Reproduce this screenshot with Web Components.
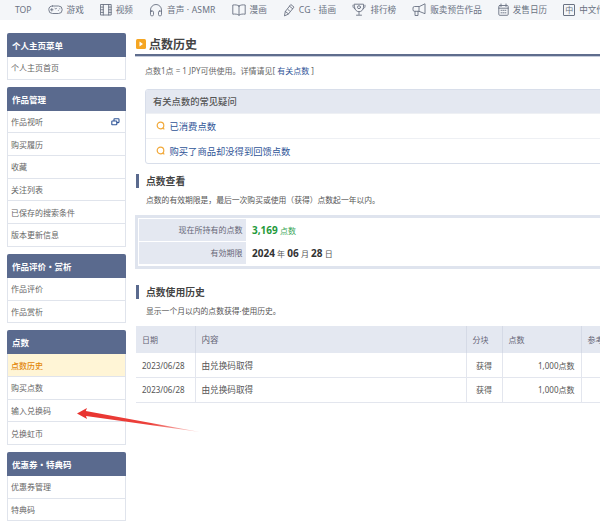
<!DOCTYPE html>
<html lang="zh-CN"><head><meta charset="utf-8"><title>点数历史</title>
<style>
html,body{margin:0;padding:0;background:#fff;overflow:hidden}
body{width:600px;height:527px;position:relative;font-family:"Noto Sans","Noto Sans CJK SC",sans-serif;color:#444;font-size:8px}
.wrap{display:flex;align-items:flex-start;gap:9px;padding:13px 0 0 7px;width:900px;box-sizing:border-box}
</style></head><body>
<x-nav>
<x-nav-item>TOP</x-nav-item>
<x-nav-item icon="game">游戏</x-nav-item>
<x-nav-item icon="film">视频</x-nav-item>
<x-nav-item icon="phones" style="letter-spacing:.15px">音声 · ASMR</x-nav-item>
<x-nav-item icon="book">漫画</x-nav-item>
<x-nav-item icon="pen" style="letter-spacing:.3px">CG · 插画</x-nav-item>
<x-nav-item icon="trophy">排行榜</x-nav-item>
<x-nav-item icon="mega">贩卖预告作品</x-nav-item>
<x-nav-item icon="cal">发售日历</x-nav-item>
<x-nav-item icon="zh">中文作品</x-nav-item>
</x-nav>
<div class="wrap">
<x-sidebar>
<x-side-group label="个人主页菜单"><x-side-item>个人主页首页</x-side-item></x-side-group>
<x-side-group label="作品管理"><x-side-item ext>作品视听</x-side-item><x-side-item>购买履历</x-side-item><x-side-item>收藏</x-side-item><x-side-item>关注列表</x-side-item><x-side-item>已保存的搜索条件</x-side-item><x-side-item>版本更新信息</x-side-item></x-side-group>
<x-side-group label="作品评价・赏析"><x-side-item>作品评价</x-side-item><x-side-item>作品赏析</x-side-item></x-side-group>
<x-side-group label="点数"><x-side-item active>点数历史</x-side-item><x-side-item>购买点数</x-side-item><x-side-item>输入兑换码</x-side-item><x-side-item>兑换虹币</x-side-item></x-side-group>
<x-side-group label="优惠券・特典码"><x-side-item>优惠券管理</x-side-item><x-side-item>特典码</x-side-item></x-side-group>
</x-sidebar>
<x-main>
<x-page-title>点数历史</x-page-title>
<x-faq></x-faq>
<x-section label="点数查看" desc="点数的有效期限是，最后一次购买或使用（获得）点数起一年以内。"><x-points></x-points></x-section>
<x-section label="点数使用历史" desc="显示一个月以内的点数获得·使用历史。"><x-history></x-history></x-section>
</x-main>
</div>
<x-arrow></x-arrow>
<script>
const def=(name,html,extra={})=>{customElements.define(name,class extends HTMLElement{
  constructor(){super();this.attachShadow({mode:'open'}).innerHTML=html;}
  connectedCallback(){extra.init&&extra.init.call(this);}
});};
const S='fill="none" stroke="#6a7282" stroke-width=".9" stroke-linecap="round" stroke-linejoin="round"';
const ICONS={
game:[15,`<rect x=".8" y="3" width="13.400" height="7.500" rx="3.700" ${S}/><path d="M3.800 5.500v2.500M2.600 6.750h2.400M7 5.500c.5.4 1 .4 1.500 0M10.300 7.400h.01M11.800 5.800h.01" ${S}/>`],
film:[12,`<path d="M.8 1.500h10.400v10.500H.8z" ${S}/><path d="M3.300 1.500v10.500M8.700 1.500v10.500M.8 4.100h2.500M.8 6.750h2.500M.8 9.400h2.500M8.700 4.100h2.500M8.700 6.750h2.500M8.700 9.400h2.500" ${S}/>`],
phones:[14,`<path d="M1.500 9V7a5.500 5.500 0 0 1 11 0v2" ${S}/><rect x="1.500" y="8" width="3" height="4.800" rx="1.200" ${S}/><rect x="9.500" y="8" width="3" height="4.800" rx="1.200" ${S}/>`],
book:[14,`<path d="M7 3C5.500 1.800 3 1.700.8 2v9.200c2.200-.3 4.700-.2 6.200 1 1.500-1.200 4-1.300 6.200-1V2C11 1.700 8.500 1.800 7 3zM7 3v9.200" ${S}/>`],
pen:[12,`<path d="M1.500 12.500l.8-4L7.800 1.500l3.200 2.600-5.500 6.800z" ${S}/><path d="M2.300 8.500l3.200 2.400M6.500 3.200l3.200 2.600M5 6.600l1.500 1.200" ${S}/>`],
trophy:[14,`<path d="M2.500 1.200h9v3a4.500 4.500 0 0 1-9 0zM1 2.200c-.3 2 .4 3.100 2 3.600M13 2.200c.3 2-.4 3.100-2 3.600M7 8.800v2.700M4.500 12.200h5" ${S}/><circle cx="7" cy="4.200" r="1.500" ${S}/>`],
mega:[14,`<path d="M13 1.200v9.500L7 8.300H2.500A1.500 1.500 0 0 1 1 6.800V5a1.500 1.500 0 0 1 1.500-1.500H7zM7 3.500v4.800M3 8.300v4.200h3V8.300" ${S}/>`],
cal:[11,`<rect x=".8" y="2.500" width="9.400" height="9.800" rx="1" ${S}/><path d="M3 1v2.500M8 1v2.500M.8 5.200h9.400M3 7.300h.9M5 7.300h.9M7 7.300h.9M3 9.800h.9M5 9.800h.9M7 9.800h.9" ${S}/>`]
};
def('x-nav',`<style>:host{display:flex;align-items:center;gap:16px;height:20px;padding-left:15px;background:#f4f6f9;white-space:nowrap;overflow:hidden;width:600px;box-sizing:border-box}</style><slot></slot>`);
def('x-nav-item',`<style>:host{display:inline-flex;align-items:center;gap:4px;font-size:8.600px;color:#6a7282;flex:none;line-height:20px}svg{display:block;flex:none}.z{display:block;box-sizing:border-box;width:12px;height:12px;border:1px solid #6a7282;border-radius:1px;font-size:8px;line-height:10px;text-align:center}</style><span id="i" style="display:contents"></span><slot></slot>`,{init(){
  const k=this.getAttribute('icon'),el=this.shadowRoot.getElementById('i');if(!k)return;
  if(k==='zh'){el.innerHTML='<span class="z">中</span>';return;}
  const [w,p]=ICONS[k];el.innerHTML=`<svg width="${w}" height="14" viewBox="0 0 ${w} 14">${p}</svg>`;
}});
def('x-sidebar',`<style>:host{display:flex;flex-direction:column;gap:7px;width:119px;flex:none}</style><slot></slot>`);
def('x-side-group',`<style>:host{display:block;background:#fff}.h{background:#5a6a8e;color:#fff;font-weight:700;font-size:8.500px;line-height:25px;height:24px;padding-left:5px;border-radius:2px 2px 0 0}</style><div class="h" id="h"></div><slot></slot>`,{init(){this.shadowRoot.getElementById('h').textContent=this.getAttribute('label');}});
def('x-side-item',`<style>:host{display:flex;align-items:center;justify-content:space-between;height:22.700px;box-sizing:border-box;padding:0 5px 0 3px;font-size:8px;color:#666;border:1px solid #e0e4ec;border-top:0}:host([active]){background:#fff5d6;color:#e2860a;font-weight:500}svg{display:none}:host([ext]) svg{display:block}</style><slot></slot><svg width="9" height="8" viewBox="0 0 9 8" fill="none" stroke="#2f5597" stroke-width="1.100"><rect x="3" y=".8" width="5" height="3.800" rx=".6"/><rect x=".8" y="3" width="5" height="3.800" rx=".6" fill="#fff"/></svg>`);
def('x-main',`<style>:host{display:block;width:760px;flex:none}</style><slot></slot>`);
def('x-page-title',`<style>:host{display:block}.t{display:flex;align-items:center;gap:3px;height:21px;font-size:12px;font-weight:700;color:#444;margin-left:1px}svg{display:block}.u{height:2px;background:#5f6d8d;border-bottom:1px solid #c5ccdb}.p{margin:8px 0 0 10px;font-size:8px;line-height:12px;color:#666}.p a{color:#2f5597}</style><div class="t"><svg width="10" height="10" viewBox="0 0 10 10"><rect width="10" height="10" rx="1.500" fill="#f5a623"/><path d="M3.500 2.500l3.500 2.500-3.500 2.500z" fill="#fff"/></svg><slot></slot></div><div class="u"></div><div class="p">点数1点 = 1 JPY可供使用。详情请见[ <a>有关点数</a> ]</div>`);
def('x-faq',`<style>:host{display:block;margin:12px 0 0 10px;border:1px solid #d8deea;border-radius:3px;overflow:hidden;font-size:9.300px}.h{height:23px;line-height:23px;background:#e4e8f1;padding-left:7px;font-weight:500;color:#555}.r{height:25px;display:flex;align-items:center;gap:3.500px;padding-left:10px;color:#2f5597;border-top:1px solid #eef0f4;box-sizing:border-box}svg{display:block}</style><div class="h">有关点数的常见疑问</div><div class="r"><svg width="10" height="10" viewBox="0 0 10 10" fill="none" stroke="#f2a93b" stroke-width="1.200"><circle cx="4.500" cy="4.500" r="3.300"/><path d="M6.800 6.800l1.500 1.500"/></svg>已消费点数</div><div class="r"><svg width="10" height="10" viewBox="0 0 10 10" fill="none" stroke="#f2a93b" stroke-width="1.200"><circle cx="4.500" cy="4.500" r="3.300"/><path d="M6.800 6.800l1.500 1.500"/></svg>购买了商品却没得到回馈点数</div>`);
def('x-section',`<style>:host{display:block;margin-top:10px}.h{display:flex;align-items:center;gap:7px;height:14px;font-size:9.800px;font-weight:700;color:#444;margin-left:1px}.h i{display:block;width:3px;height:14px;background:#5a6a8e}.d{margin:6px 0 0 11px;font-size:7.800px;line-height:12px;color:#555}</style><div class="h"><i></i><span id="l"></span></div><div class="d" id="d"></div><slot></slot>`,{init(){this.shadowRoot.getElementById('l').textContent=this.getAttribute('label');this.shadowRoot.getElementById('d').textContent=this.getAttribute('desc');}});
def('x-points',`<style>:host{display:block;margin:9px 0 16px 0;border:3px solid #dfe4ee;padding:1px 1px 2px;background:#fff;width:700px;box-sizing:border-box;font-size:8px}.r{display:flex;height:22px;margin-bottom:1px;align-items:stretch}.r:last-child{margin-bottom:0}.l{width:107px;background:#e4e8f1;text-align:right;padding-right:3.500px;box-sizing:border-box;line-height:22px;color:#667}.v{padding-left:6px;line-height:22px;color:#555;word-spacing:.1px}b{font-size:10px;font-weight:700}.g{color:#1f9a3c}.k{color:#333}.g2{color:#3aa655}</style><div class="r"><div class="l">现在所持有的点数</div><div class="v"><b class="g">3,169</b> <span class="g2">点数</span></div></div><div class="r"><div class="l">有効期限</div><div class="v"><b class="k">2024</b> 年 <b class="k">06</b> 月 <b class="k">28</b> 日</div></div>`);
def('x-history',`<style>:host{display:block;margin:9px 0 0 1px;font-size:8px;color:#555}table{border-collapse:collapse;table-layout:fixed;width:620px}th{background:#e4e8f1;font-weight:400;height:27px;text-align:left;padding:0 6px;color:#667;box-sizing:border-box;border-left:1px solid #d5dae6}td{height:24.500px;padding:0 6px;box-sizing:border-box;border-left:1px solid #e3e6ee;border-bottom:1px solid #e3e6ee}th:first-child,td:first-child{border-left:0}.big{font-size:8.600px}.c{text-align:center}.n{text-align:right}</style><table><colgroup><col style="width:59px"><col style="width:271px"><col style="width:36px"><col style="width:79px"><col style="width:175px"></colgroup><tr><th>日期</th><th class="big">内容</th><th>分块</th><th>点数</th><th>参考</th></tr><tr><td>2023/06/28</td><td class="big">由兑换码取得</td><td class="c">获得</td><td class="n">1,000点数</td><td></td></tr><tr><td>2023/06/28</td><td class="big">由兑换码取得</td><td class="c">获得</td><td class="n">1,000点数</td><td></td></tr></table>`);
def('x-arrow',`<style>:host{position:absolute;left:75px;top:400px;width:130px;height:40px;display:block;pointer-events:none}svg{display:block}</style><svg width="130" height="40" viewBox="0 0 130 40"><defs><linearGradient id="g" x1="0" x2="1"><stop offset="0" stop-color="#e8322e"/><stop offset=".6" stop-color="#ec423c"/><stop offset="1" stop-color="#f5a09c" stop-opacity=".5"/></linearGradient></defs><path d="M2 13.500L12 8l-1.200 3L125 32 11 16l1 3z" fill="url(#g)"/></svg>`);
</script>
</body></html>
